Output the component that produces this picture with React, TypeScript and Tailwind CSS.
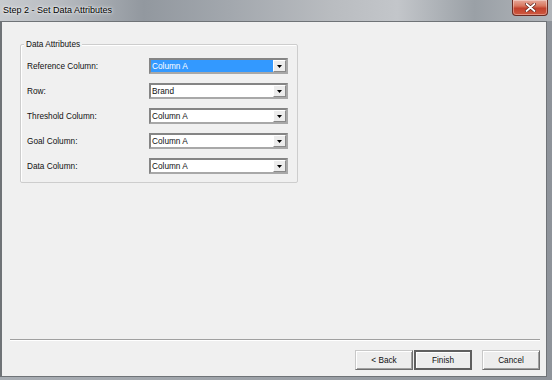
const ROWS = [
  { label: 'Reference Column:', value: 'Column A', selected: true },
  { label: 'Row:', value: 'Brand' },
  { label: 'Threshold Column:', value: 'Column A' },
  { label: 'Goal Column:', value: 'Column A' },
  { label: 'Data Column:', value: 'Column A' },
];

export default function App() {
  return (
    <div className="w-[552px] h-[380px] flex flex-col overflow-hidden bg-[linear-gradient(to_right,#a9aeb4,#9ca1a7_50%,#8e939a)] font-['Liberation_Sans',Arial,sans-serif] text-[8.25px] text-[#111]">
      {/* title bar */}
      <div className="h-[21px] shrink-0 flex items-start bg-[linear-gradient(to_right,#c8cbcf_0%,#b9bdc2_10%,#92989f_26%,#a3a8ae_42%,#b9bcc0_60%,#c3c6ca_72%,#9aa0a6_86%,#b1b5ba_100%)]">
        <span className="ml-[3px] mt-[5px] text-[9px] leading-[11px] text-black [text-shadow:0_0_4px_#fff,0_0_2px_#fff]">Step 2 - Set Data Attributes</span>
        <CloseButton />
      </div>

      {/* client area */}
      <div className="flex-1 flex flex-col mr-[5px] mb-[3px] border border-l-2 border-[#6f7377] bg-[#f0f0f0]">
        <div className="pl-[18px] pt-[22px]">
          <div className="w-[278px] flex flex-col border border-[#cdcdcd] rounded-[2px] pl-[6px] pb-[8px] shadow-[inset_1px_1px_0_#fff]">
            <span className="-mt-[6px] -ml-[3px] w-fit px-[2px] leading-[11px] bg-[#f0f0f0]">Data Attributes</span>
            <div className="mt-[8px] flex flex-col gap-[9px]">
              {ROWS.map(r => (
                <div key={r.label} className="flex items-center h-[16px]">
                  <span className="w-[122px] leading-[11px]">{r.label}</span>
                  <Combo value={r.value} selected={r.selected} />
                </div>
              ))}
            </div>
          </div>
        </div>

        <div className="mt-auto ml-[8px] mr-[6px] border-t border-b border-t-[#a0a0a0] border-b-white" />

        <div className="mt-[9px] mb-[6px] mr-[6px] flex justify-end">
          <Button label="< Back" />
          <Button label="Finish" primary className="ml-[1px]" />
          <Button label="Cancel" className="ml-[10px]" />
        </div>
      </div>
    </div>
  );
}

function CloseButton() {
  return (
    <div className="ml-auto mr-[4px] w-[36px] h-[16px] rounded-b-[4px] border border-t-0 border-[#6b2b22] bg-[linear-gradient(to_bottom,#e6a99b_0%,#d8775f_40%,#c1412d_55%,#cf5a40_100%)] flex items-center justify-center shadow-[inset_0_0_0_1px_rgba(255,255,255,0.35)]">
      <svg width="11" height="9" viewBox="0 0 11 9">
        <path d="M1.5 1L9.5 8M9.5 1L1.5 8" stroke="#5a2018" strokeWidth="3.2" strokeLinecap="round" />
        <path d="M1.5 1L9.5 8M9.5 1L1.5 8" stroke="#fff" strokeWidth="1.8" strokeLinecap="round" />
      </svg>
    </div>
  );
}

function Combo({ value, selected }: { value: string; selected?: boolean }) {
  return (
    <div className="w-[139px] h-[16px] flex border-2 border-[#a8a8a8] border-t-[#858585] border-l-[#858585] bg-white">
      <span className={`flex-1 flex items-center pl-[1px] leading-[11px] ${selected ? 'bg-[#3399ff] text-white' : 'text-[#111]'}`}>{value}</span>
      <span className="w-[13px] h-full flex items-center justify-center bg-[#ececec] border border-t-white border-l-white border-r-[#8a8a8a] border-b-[#8a8a8a]">
        <svg width="5" height="3" viewBox="0 0 5 3"><path d="M0 0h5L2.5 3z" fill="#000" /></svg>
      </span>
    </div>
  );
}

function Button({ label, primary, className = '' }: { label: string; primary?: boolean; className?: string }) {
  return (
    <button className={`w-[58px] h-[20px] flex items-center justify-center leading-[11px] text-[#111] bg-[#ededed] ${primary ? 'border-2 border-[#5f5f5f] shadow-[inset_1px_1px_0_#fff]' : 'border border-t-[#c8c8c8] border-l-[#c8c8c8] border-r-[#6e6e6e] border-b-[#6e6e6e] shadow-[inset_1px_1px_0_#fff,inset_-1px_-1px_0_#a0a0a0]'} ${className}`}>
      {label}
    </button>
  );
}
